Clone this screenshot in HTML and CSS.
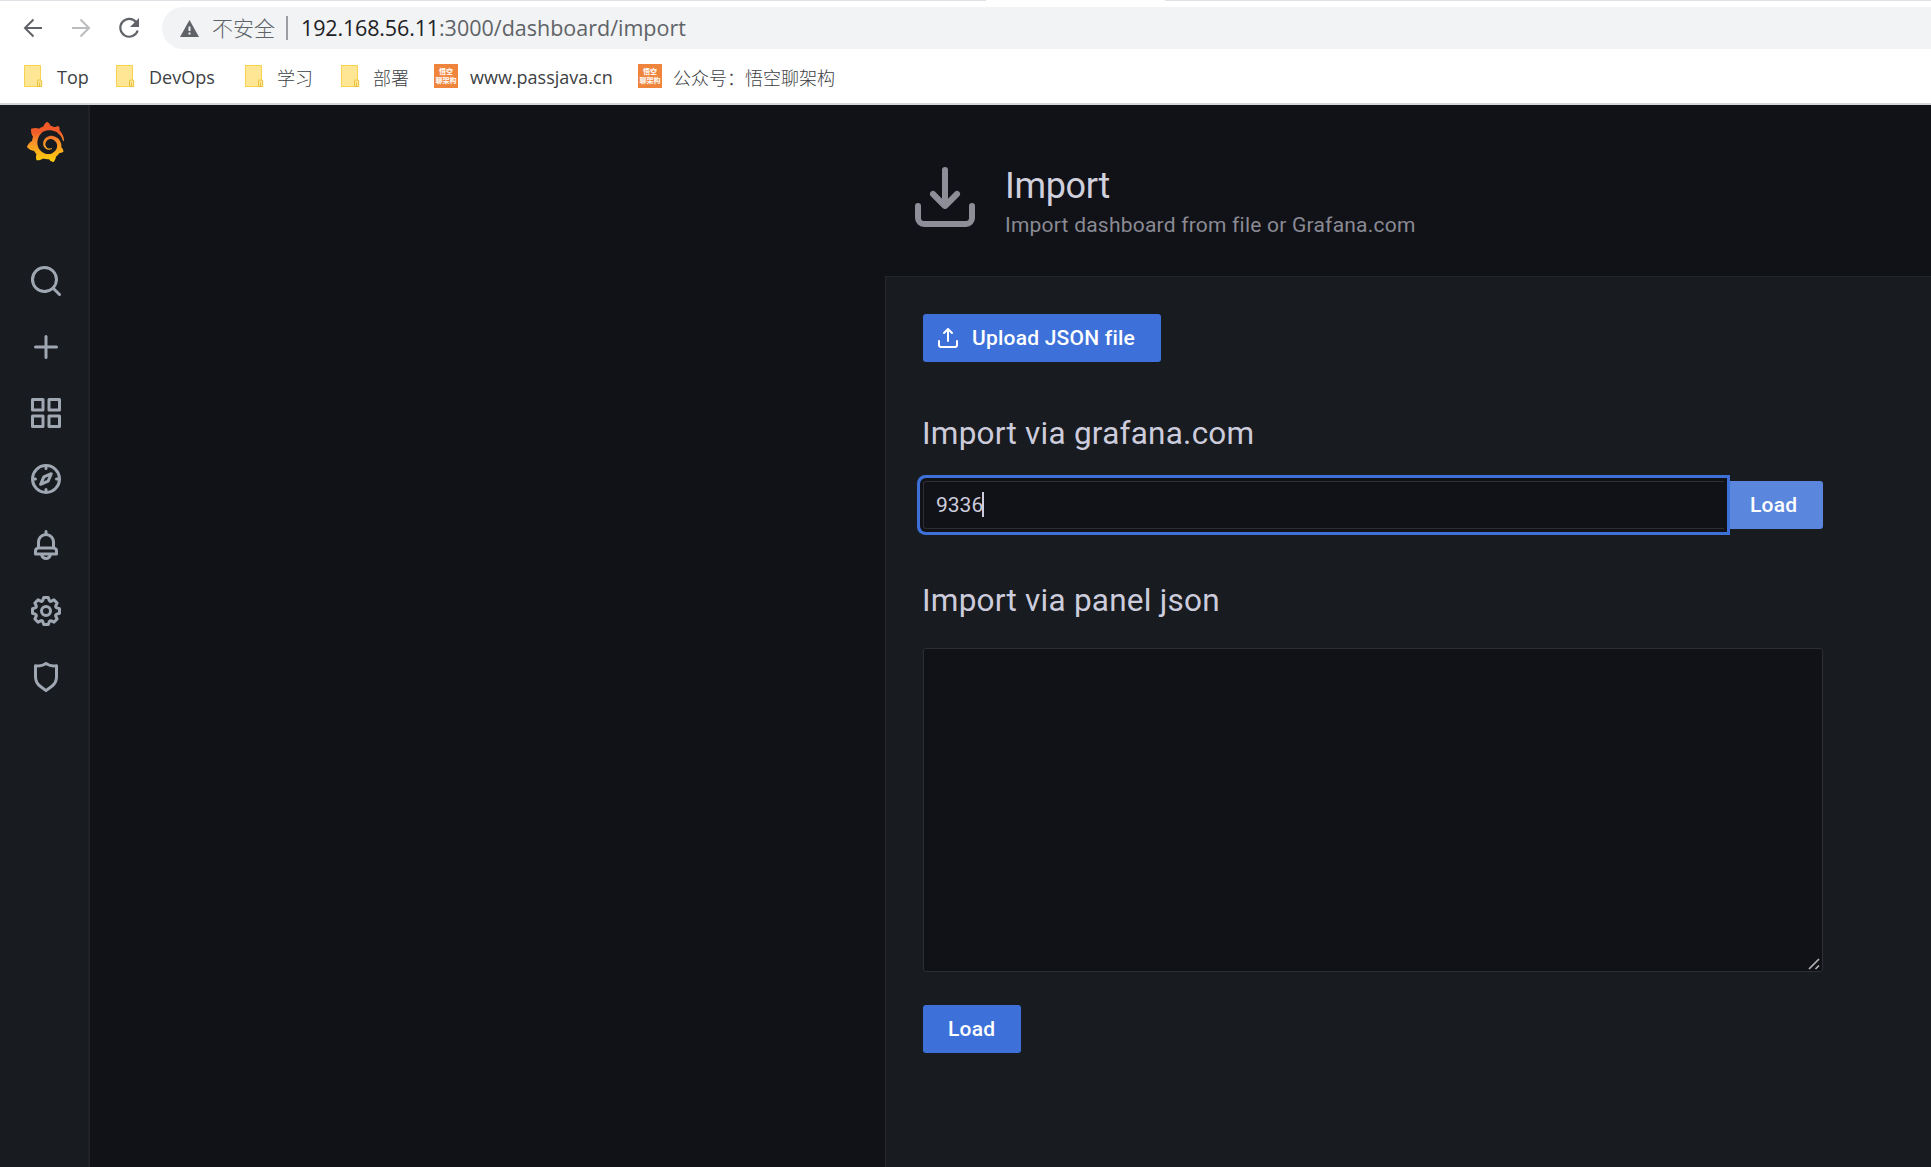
FILE: index.html
```html
<!DOCTYPE html>
<html lang="zh-CN">
<head>
<meta charset="utf-8">
<title>Import - Grafana</title>
<link rel="stylesheet" href="styles.css">
</head>
<body>
<svg class="defs" width="0" height="0" aria-hidden="true">
  <symbol id="folder" viewBox="0 0 19 22">
    <path fill="#ffe694" d="M0 0h17v22H0z"/>
    <path fill="none" stroke="#f6d250" d="M.5.5h16v21H.5z"/>
    <path fill="#ffe694" stroke="#eac13c" d="M13.5 21.500v-5.500q0-1 1.200-1h1.800q1.200 0 1.200 1v5.500z"/>
    <path fill="none" stroke="#eac13c" d="M15.500 21v-3.500"/>
  </symbol>
</svg>
<header class="browser">
  <div class="tabstrip"><i class="tab-edge left"></i><i class="tab-edge right"></i></div>
  <div class="toolbar">
    <svg class="nav-btn" viewBox="0 0 24 24" fill="none" stroke="#5f6368" stroke-width="2"><path d="M21 12H4M12.500 3.500L4 12l8.500 8.500"/></svg>
    <svg class="nav-btn" viewBox="0 0 24 24" fill="none" stroke="#babcbe" stroke-width="2"><path d="M3 12h17M11.500 3.500L20 12l-8.500 8.500"/></svg>
    <svg class="nav-btn" viewBox="0 0 24 24"><path fill="none" stroke="#5f6368" stroke-width="2.200" d="M19.200 6.300A8.900 8.900 0 1 0 20.700 14.500"/><path fill="#5f6368" d="M22 2v9h-9z"/></svg>
    <div class="omnibox">
      <svg class="warn" width="19" height="17" viewBox="0 0 19 17"><path fill="#5f6368" d="M9.500 0L19 17H0z"/><path fill="#f1f3f4" d="M8.500 6.500h2v4.500h-2zM8.500 12.500h2v2h-2z"/></svg>
      <span class="insecure">不安全</span>
      <i class="sep"></i>
      <span class="url"><b>192.168.56.11</b>:3000/dashboard/import</span>
    </div>
  </div>
  <nav class="bookmarks">
    <a><svg class="folder"><use href="#folder"/></svg><span>Top</span></a>
    <a><svg class="folder"><use href="#folder"/></svg><span>DevOps</span></a>
    <a><svg class="folder"><use href="#folder"/></svg><span class="cjk">学习</span></a>
    <a><svg class="folder"><use href="#folder"/></svg><span class="cjk">部署</span></a>
    <a><span class="favicon"><em>悟空</em><em>聊架构</em></span><span>www.passjava.cn</span></a>
    <a><span class="favicon"><em>悟空</em><em>聊架构</em></span><span class="cjk">公众号：悟空聊架构</span></a>
  </nav>
</header>
<div class="app">
  <aside class="sidemenu">
    <svg class="logo" viewBox="8.500 5 334.200 357"><defs><linearGradient id="flame" x1="0" y1="1" x2="0" y2="0"><stop offset="0" stop-color="#fcd00c"/><stop offset=".5" stop-color="#f9912a"/><stop offset=".75" stop-color="#f15a29"/><stop offset="1" stop-color="#f05a28"/></linearGradient></defs><path fill="url(#flame)" d="M342,161.2c-0.6-6.1-1.6-13.1-3.6-20.9c-2-7.7-5-16.2-9.4-25c-4.4-8.8-10.1-17.9-17.5-26.8c-2.9-3.5-6.1-6.9-9.5-10.2c5.1-20.3-6.2-37.9-6.2-37.9c-19.5-1.2-31.9,6.1-36.5,9.4c-0.8-0.3-1.5-0.7-2.3-1c-3.3-1.3-6.7-2.6-10.3-3.7c-3.5-1.1-7.1-2.1-10.8-3c-3.7-0.9-7.4-1.6-11.2-2.2c-0.7-0.1-1.3-0.2-2-0.3c-8.5-27.2-32.9-38.6-32.9-38.6c-27.3,17.3-32.4,41.5-32.4,41.5s-0.1,0.5-0.3,1.4c-1.5,0.4-3,0.9-4.5,1.3c-2.1,0.6-4.2,1.4-6.2,2.2c-2.1,0.8-4.1,1.6-6.2,2.5c-4.1,1.8-8.2,3.8-12.2,6c-3.9,2.2-7.7,4.6-11.4,7.1c-0.5-0.2-1-0.4-1-0.4c-37.8-14.4-71.3,2.9-71.3,2.9c-3.1,40.2,15.1,65.5,18.7,70.1c-0.9,2.5-1.7,5-2.5,7.5c-2.8,9.1-4.9,18.4-6.2,28.1c-0.2,1.4-0.4,2.8-0.5,4.2C18.800,192.700,8.500,228,8.500,228c29.100,33.500,63.100,35.600,63.100,35.600c0,0,0.100-0.100,0.100-0.100c4.300,7.700,9.300,15,14.900,21.900c2.400,2.900,4.800,5.600,7.400,8.300c-10.600,30.400,1.500,55.600,1.500,55.600c32.400,1.200,53.700-14.200,58.200-17.700c3.200,1.100,6.500,2.100,9.800,2.900c10,2.600,20.200,4.100,30.400,4.500c2.500,0.100,5.100,0.200,7.600,0.100l1.200,0l0.800,0l1.600,0l1.600-0.100l0,0.100c15.300,21.800,42.100,24.900,42.100,24.900c19.100-20.100,20.200-40.100,20.200-44.400l0,0c0,0,0-0.100,0-0.300c0-0.400,0-0.600,0-0.600l0,0c0-0.300,0-0.600,0-0.900c4-2.800,7.800-5.800,11.400-9.100c7.600-6.900,14.300-14.800,19.900-23.300c0.500-0.800,1-1.600,1.500-2.400c21.600,1.200,36.900-13.400,36.900-13.400c-3.600-22.500-16.400-33.500-19.100-35.600l0,0c0,0-0.100-0.100-0.300-0.200c-0.200-0.100-0.200-0.200-0.200-0.200c0,0,0,0,0,0c-0.100-0.100-0.300-0.200-0.500-0.300c0.100-1.400,0.200-2.700,0.300-4.100c0.200-2.400,0.200-4.900,0.200-7.300l0-1.800l0-0.900l0-0.500l-0.100-2.100l-0.100-2c0-0.700-0.100-1.300-0.200-1.900c-0.100-0.600-0.100-1.300-0.200-1.900l-0.200-1.900l-0.300-1.900c-0.400-2.500-0.800-4.900-1.400-7.400c-2.300-9.700-6.100-18.900-11-27.200c-5-8.300-11.200-15.600-18.300-21.800c-7-6.200-14.900-11.200-23.100-14.900c-8.300-3.700-16.900-6.100-25.500-7.200c-4.300-0.600-8.600-0.800-12.900-0.700l-1.600,0l-1.600,0l-1.600,0.100c-0.600,0-1.200,0.100-1.700,0.100c-2.200,0.200-4.400,0.500-6.500,0.900c-8.600,1.600-16.700,4.700-23.800,9c-7.100,4.300-13.300,9.600-18.300,15.600c-5,6-8.900,12.700-11.600,19.600c-2.700,6.900-4.200,14.100-4.600,21c-0.100,1.700-0.100,3.500-0.100,5.200c0,0.400,0,0.900,0,1.300l0.100,1.400c0.100,0.800,0.100,1.700,0.200,2.500c0.300,3.500,1,6.900,1.900,10.100c1.900,6.500,4.900,12.400,8.600,17.400c3.700,5,8.200,9.100,12.900,12.400c4.700,3.200,9.800,5.500,14.800,7c5,1.500,10,2.100,14.700,2.100c0.600,0,1.200,0,1.700,0c0.300,0,0.600,0,0.900,0c0.300,0,0.600,0,0.900-0.100c0.500,0,1-0.100,1.500-0.100c0.100,0,0.300,0,0.400-0.100l0.500-0.100c0.300,0,0.600-0.100,0.900-0.100c0.600-0.100,1.100-0.200,1.700-0.300c0.600-0.100,1.100-0.200,1.600-0.400c1.100-0.200,2.100-0.600,3.100-0.900c2-0.700,4-1.500,5.700-2.400c1.800-0.900,3.400-2,5-3c0.400-0.300,0.900-0.600,1.300-1c1.600-1.300,1.900-3.700,0.600-5.300c-1.100-1.400-3.100-1.800-4.700-0.900c-0.400,0.200-0.800,0.400-1.200,0.600c-1.400,0.700-2.800,1.300-4.300,1.800c-1.500,0.500-3.100,0.900-4.700,1.200c-0.800,0.100-1.600,0.200-2.500,0.300c-0.400,0-0.800,0.100-1.300,0.100c-0.400,0-0.900,0-1.200,0c-0.400,0-0.800,0-1.200,0c-0.500,0-1,0-1.500-0.100l-0.600,0c-0.200,0-0.500,0-0.700-0.100c-0.500-0.100-0.900-0.100-1.400-0.200c-3.700-0.500-7.400-1.600-10.900-3.200c-3.600-1.600-7-3.800-10.100-6.600c-3.100-2.800-5.800-6.100-7.900-9.900c-2.100-3.800-3.600-8-4.300-12.400c-0.300-2.200-0.500-4.500-0.400-6.700c0-0.600,0.100-1.200,0.100-1.800l0-0.800c0-0.300,0.100-0.600,0.100-0.900c0.100-1.200,0.300-2.400,0.500-3.600c1.700-9.600,6.500-19,13.900-26.100c1.900-1.800,3.900-3.400,6-4.900c2.100-1.500,4.400-2.800,6.800-3.900c2.400-1.100,4.800-2,7.400-2.700c2.500-0.700,5.100-1.100,7.800-1.400c1.300-0.100,2.600-0.200,4-0.200c0.400,0,0.600,0,0.900,0l1.100,0l0.700,0l0.400,0l1.100,0.100c2.900,0.200,5.700,0.600,8.500,1.300c5.600,1.200,11.100,3.300,16.200,6.100c10.200,5.700,18.900,14.500,24.200,25.100c2.700,5.300,4.600,11,5.500,16.900c0.200,1.500,0.400,3,0.500,4.500l0.100,1.100l0.100,1.100c0,0.400,0,0.800,0,1.100c0,0.400,0,0.800,0,1.100l0,1l0,1.100c0,0.700-0.100,1.900-0.100,2.600c-0.100,1.600-0.300,3.300-0.500,4.900c-0.200,1.600-0.500,3.200-0.800,4.800c-0.300,1.600-0.700,3.200-1.100,4.700c-0.800,3.100-1.800,6.200-3,9.300c-2.400,6-5.600,11.800-9.400,17.100c-7.700,10.600-18.200,19.200-30.200,24.700c-6,2.700-12.300,4.700-18.800,5.700c-3.200,0.600-6.500,0.900-9.800,1l-0.600,0l-0.500,0l-1.100,0l-1.600,0l-1.200,0c-1.800,0-3.500-0.100-5.300-0.300c-7-0.500-13.900-1.800-20.700-3.700c-6.700-1.900-13.200-4.600-19.400-7.800c-12.300-6.600-23.400-15.600-32-26.500c-4.300-5.400-8.100-11.300-11.200-17.400c-3.100-6.100-5.600-12.600-7.400-19.100c-1.800-6.600-2.900-13.300-3.400-20.100l-0.100-1.300l0-6.500c0-0.800,0-1.700,0-2.500c0.100-3.300,0.400-6.800,0.800-10.200c0.400-3.400,1-6.900,1.700-10.300c0.700-3.400,1.500-6.800,2.500-10.200c1.900-6.700,4.300-13.200,7.100-19.300c5.700-12.200,13.100-23.100,22-31.800c2.200-2.200,4.500-4.200,6.900-6.200c2.400-1.900,4.900-3.700,7.500-5.400c2.500-1.700,5.200-3.200,7.900-4.600c1.300-0.700,2.700-1.400,4.100-2c1.400-0.600,2.800-1.200,4.200-1.800c2.800-1.200,5.700-2.200,8.700-3.100c1.500-0.400,2.900-0.900,4.400-1.300c1.500-0.400,3-0.800,4.500-1.100c1.500-0.400,3-0.700,4.600-1c1.500-0.300,3-0.500,4.600-0.800c1.600-0.200,3.300-0.400,4.900-0.600c1.900-0.200,3.800-0.400,5.800-0.500c2.900-0.200,9.900-0.400,12.800-0.200c5.800,0.200,11.500,0.900,17,1.900c11.100,2.100,21.500,5.600,31,10.300c9.500,4.600,17.900,10.300,25.300,16.500c3.600,3,7,6.200,10.200,9.700c3.100,3.300,6,6.600,8.600,10c5.200,6.700,9.400,13.500,12.700,19.900c1.600,3,3,6.200,4.300,9.400c1.200,3,2.400,5.900,3.300,8.600c1.500,4.400,2.600,8.300,3.500,11.700c0.300,1.400,1.600,2.300,3,2.100c1.500-0.100,2.600-1.300,2.600-2.800C342.600,170.400,342.500,166.100,342,161.200z"/></svg>
    <svg class="mi" viewBox="0 0 24 24"><path d="M21.710,20.290,18,16.610A9,9,0,1,0,16.610,18l3.680,3.680a1,1,0,0,0,1.420,0A1,1,0,0,0,21.710,20.290ZM11,18a7,7,0,1,1,7-7A7,7,0,0,1,11,18Z"/></svg>
    <svg class="mi" viewBox="0 0 24 24"><path d="M19,11H13V5a1,1,0,0,0-2,0v6H5a1,1,0,0,0,0,2h6v6a1,1,0,0,0,2,0V13h6a1,1,0,0,0,0-2Z"/></svg>
    <svg class="mi" viewBox="0 0 24 24"><path d="M10,13H3a1,1,0,0,0-1,1v7a1,1,0,0,0,1,1h7a1,1,0,0,0,1-1V14A1,1,0,0,0,10,13ZM9,20H4V15H9ZM21,2H14a1,1,0,0,0-1,1v7a1,1,0,0,0,1,1h7a1,1,0,0,0,1-1V3A1,1,0,0,0,21,2ZM20,9H15V4h5Zm1,4H14a1,1,0,0,0-1,1v7a1,1,0,0,0,1,1h7a1,1,0,0,0,1-1V14A1,1,0,0,0,21,13Zm-1,7H15V15h5ZM10,2H3A1,1,0,0,0,2,3v7a1,1,0,0,0,1,1h7a1,1,0,0,0,1-1V3A1,1,0,0,0,10,2ZM9,9H4V4H9Z"/></svg>
    <svg class="mi" viewBox="0 0 24 24"><path d="M12,2A10,10,0,1,0,22,12,10,10,0,0,0,12,2Zm1,17.930V19a1,1,0,0,0-2,0v.93A8,8,0,0,1,4.070,13H5a1,1,0,0,0,0-2H4.070A8,8,0,0,1,11,4.070V5a1,1,0,0,0,2,0V4.070A8,8,0,0,1,19.930,11H19a1,1,0,0,0,0,2h.93A8,8,0,0,1,13,19.930ZM15.140,7.550l-5,2.120a1,1,0,0,0-.52.52l-2.120,5a1,1,0,0,0,.21,1.100,1,1,0,0,0,.7.29.93.93,0,0,0,.4-.09l5-2.120a1,1,0,0,0,.52-.52l2.120-5a1,1,0,0,0-1.310-1.310Zm-2.490,5.100-2.280,1,1-2.280,2.280-1Z"/></svg>
    <svg class="mi" viewBox="0 0 24 24"><path d="M18,13.180V10a6,6,0,0,0-5-5.910V3a1,1,0,0,0-2,0V4.090A6,6,0,0,0,6,10v3.180A3,3,0,0,0,4,16v2a1,1,0,0,0,1,1H8.140a4,4,0,0,0,7.720,0H19a1,1,0,0,0,1-1V16A3,3,0,0,0,18,13.180ZM8,10a4,4,0,0,1,8,0v3H8Zm4,10a2,2,0,0,1-1.720-1h3.440A2,2,0,0,1,12,20Zm6-3H6V16a1,1,0,0,1,1-1H17a1,1,0,0,1,1,1Z"/></svg>
    <svg class="mi" viewBox="0 0 24 24"><path d="M21.320,9.550l-1.890-.63.89-1.780A1,1,0,0,0,20.130,6L18,3.870a1,1,0,0,0-1.150-.19l-1.780.89-.63-1.890A1,1,0,0,0,13.500,2h-3a1,1,0,0,0-.95.68L8.920,4.570,7.140,3.680A1,1,0,0,0,6,3.870L3.870,6a1,1,0,0,0-.19,1.150l.89,1.780-1.890.63A1,1,0,0,0,2,10.500v3a1,1,0,0,0,.68.95l1.890.63-.89,1.780A1,1,0,0,0,3.870,18L6,20.130a1,1,0,0,0,1.150.19l1.780-.89.63,1.890a1,1,0,0,0,.95.68h3a1,1,0,0,0,.95-.68l.63-1.890,1.780.89A1,1,0,0,0,18,20.130L20.130,18a1,1,0,0,0,.19-1.150l-.89-1.780,1.890-.63A1,1,0,0,0,22,13.500v-3A1,1,0,0,0,21.320,9.550ZM20,12.780l-1.200.4A2,2,0,0,0,17.640,16l.57,1.140-1.100,1.100L16,17.640a2,2,0,0,0-2.790,1.160l-.4,1.200H11.220l-.4-1.200A2,2,0,0,0,8,17.640l-1.140.57-1.100-1.100L6.360,16A2,2,0,0,0,5.200,13.180L4,12.780V11.220l1.200-.4A2,2,0,0,0,6.360,8L5.790,6.890l1.100-1.100L8,6.360A2,2,0,0,0,10.820,5.200l.4-1.200h1.560l.4,1.200A2,2,0,0,0,16,6.360l1.140-.57,1.100,1.100L17.640,8a2,2,0,0,0,1.160,2.790l1.200.4ZM12,8a4,4,0,1,0,4,4A4,4,0,0,0,12,8Zm0,6a2,2,0,1,1,2-2A2,2,0,0,1,12,14Z"/></svg>
    <svg class="mi" viewBox="0 0 24 24"><path d="M19.630,3.650a1,1,0,0,0-.84-.2,8,8,0,0,1-6.220-1.270,1,1,0,0,0-1.140,0A8,8,0,0,1,5.210,3.450a1,1,0,0,0-.84.2A1,1,0,0,0,4,4.430v7.450a9,9,0,0,0,3.770,7.330l3.650,2.600a1,1,0,0,0,1.160,0l3.650-2.600A9,9,0,0,0,20,11.880V4.430A1,1,0,0,0,19.630,3.650ZM18,11.880a7,7,0,0,1-2.930,5.700L12,19.770,8.930,17.580A7,7,0,0,1,6,11.880V5.580a10,10,0,0,0,6-1.390,10,10,0,0,0,6,1.390Z"/></svg>
  </aside>
  <main class="page">
    <div class="page-header">
      <svg class="header-icon" width="72" height="72" viewBox="0 0 24 24"><path fill="#8e8e99" d="M21,14a1,1,0,0,0-1,1v4a1,1,0,0,1-1,1H5a1,1,0,0,1-1-1V15a1,1,0,0,0-2,0v4a3,3,0,0,0,3,3H19a3,3,0,0,0,3-3V15A1,1,0,0,0,21,14Zm-9.710,1.710a1,1,0,0,0,.33.21.94.94,0,0,0,.76,0,1,1,0,0,0,.33-.21l4-4a1,1,0,0,0-1.420-1.420L13,12.590V3a1,1,0,0,0-2,0v9.590l-2.290-2.300a1,1,0,1,0-1.420,1.420Z"/></svg>
      <div class="titles">
        <h1>Import</h1>
        <p>Import dashboard from file or Grafana.com</p>
      </div>
    </div>
    <section class="panel">
      <button class="btn upload"><svg width="24" height="24" viewBox="0 0 24 24"><path fill="#fff" d="M8.710,7.710,11,5.410V15a1,1,0,0,0,2,0V5.410l2.290,2.300a1,1,0,0,0,1.420,0,1,1,0,0,0,0-1.420l-4-4a1,1,0,0,0-.33-.21,1,1,0,0,0-.76,0,1,1,0,0,0-.33.21l-4,4A1,1,0,1,0,8.710,7.710ZM21,14a1,1,0,0,0-1,1v4a1,1,0,0,1-1,1H5a1,1,0,0,1-1-1V15a1,1,0,0,0-2,0v4a3,3,0,0,0,3,3H19a3,3,0,0,0,3-3V15A1,1,0,0,0,21,14Z"/></svg><span>Upload JSON file</span></button>
      <h2>Import via grafana.com</h2>
      <div class="field">
        <div class="input"><span>9336</span><i class="caret"></i></div>
        <button class="btn hover">Load</button>
      </div>
      <h2>Import via panel json</h2>
      <div class="textarea"><svg width="12" height="12" viewBox="0 0 12 12" stroke="#b4b4b4" stroke-width="1.700"><path d="M1 11L11 1M7.500 11L11 7.500"/></svg></div>
      <button class="btn submit">Load</button>
    </section>
  </main>
</div>
</body>
</html>
```
FILE: styles.css
```css
* { box-sizing: border-box; }
body {
  margin: 0;
  width: 1931px;
  height: 1167px;
  overflow: hidden;
  display: flex;
  flex-direction: column;
  background: #111217;
  font-family: Roboto, "Liberation Sans", sans-serif;
}
.defs { position: absolute; }

/* browser chrome */
.browser {
  flex: none;
  height: 105px;
  background: #fff;
  border-bottom: 2px solid #d5d6d8;
  font-family: "Open Sans", "Noto Sans CJK SC", sans-serif;
}
.tabstrip { height: 1px; display: flex; justify-content: space-between; }
.tab-edge { background: #dee1e6; }
.tab-edge.left { width: 986px; }
.tab-edge.right { width: 766px; }
.toolbar {
  height: 54px;
  padding: 6px 0 6px 21px;
  display: flex;
  align-items: center;
  gap: 24px;
}
.nav-btn { width: 24px; height: 24px; flex: none; }
.omnibox {
  flex: 1;
  height: 42px;
  margin-left: -3px;
  padding-left: 18px;
  display: flex;
  align-items: center;
  background: #f1f3f4;
  border-radius: 21px 0 0 21px;
  font-size: 21.500px;
  color: #5f6368;
}
.warn { flex: none; }
.insecure {
  width: 63px;
  margin-left: 13px;
  padding-bottom: 1px;
  font-family: "Noto Sans CJK SC", sans-serif;
  font-weight: 300;
  font-size: 21px;
  line-height: 41px;
  white-space: nowrap;
}
.sep { width: 2px; height: 24px; margin: 0 13px 0 11px; background: #9a9da1; }
.url { padding-bottom: 1px; white-space: nowrap; }
.url b { font-weight: 400; letter-spacing: -.15px; color: #202124; }
.bookmarks {
  height: 48px;
  padding: 9px 0 0 24px;
  display: grid;
  grid-template-columns: 92px 129px 96px 93px 204px auto;
  align-items: start;
  font-size: 18px;
  color: #3c4043;
}
.bookmarks a { display: flex; align-items: center; height: 24px; white-space: nowrap; }
.bookmarks a > span:last-child { padding-top: 2px; }
.bookmarks .cjk { margin-left: -1px; font-family: "Noto Sans CJK SC", sans-serif; font-weight: 300; }
.folder { width: 19px; height: 22px; margin-right: 14px; flex: none; }
.favicon {
  width: 24px;
  height: 24px;
  margin-right: 12px;
  display: flex;
  flex-direction: column;
  align-items: center;
  justify-content: center;
  background: #ef843c;
  color: #fff;
  font-size: 7px;
  line-height: 9px;
  font-weight: 700;
}
.favicon em { font-style: normal; }

/* side menu */
.app { flex: 1; display: flex; min-height: 0; }
.sidemenu {
  width: 90px;
  flex: none;
  padding-top: 17px;
  display: flex;
  flex-direction: column;
  align-items: center;
  background: #181b1f;
  border-right: 2px solid #202226;
}
.logo { width: 37px; height: 40px; margin: 0 0 101px 3px; flex: none; }
.mi { width: 36px; height: 36px; margin: 0 0 30px 4px; flex: none; fill: #9fa7b3; }

/* page */
.page { flex: 1; padding-left: 795px; display: flex; flex-direction: column; }
.page-header { height: 171px; padding: 56px 0 0 24px; display: flex; gap: 24px; }
.header-icon { flex: none; }
.titles { padding-top: 3px; }
h1, h2, p { margin: 0; font-weight: 400; }
h1 { font-size: 36px; line-height: 45px; letter-spacing: -.32px; color: #d0d0dd; }
p { font-size: 21px; line-height: 32px; letter-spacing: .22px; color: #8a8a94; }
.panel {
  flex: 1;
  padding: 37px 107px 0 37px;
  display: flex;
  flex-direction: column;
  align-items: flex-start;
  background: #181b1f;
  border: solid #24262b;
  border-width: 1px 0 0 1px;
}
.btn {
  height: 48px;
  padding: 0 24px;
  border: 0;
  border-radius: 3px;
  background: #3d71d9;
  color: #fff;
  font: 500 21px/48px Roboto, sans-serif;
  letter-spacing: .22px;
  display: flex;
  align-items: center;
  white-space: nowrap;
}
.upload { width: 238px; padding: 0 0 0 13px; gap: 12px; }
h2 {
  margin: 52px 0 27px -1px;
  font-size: 31.500px;
  line-height: 40px;
  letter-spacing: .24px;
  color: #ccccdc;
}
.field { width: 900px; display: flex; }
.input {
  flex: 1;
  height: 48px;
  padding: 0 12px;
  z-index: 1;
  display: flex;
  align-items: center;
  background: #111217;
  border: solid #2c2e33;
  border-width: 1px 0 1px 1px;
  border-radius: 3px 0 0 3px;
  box-shadow: 0 0 0 3px #111217, 0 0 0 6px #3d71d9;
  font-size: 21px;
  color: #ccccdc;
}
.caret { width: 2px; height: 25px; margin: -1px 0 0 -1px; background: #ccccdc; }
.hover { width: 99px; padding: 0 0 0 26px; background: #5a86de; border-radius: 0 3px 3px 0; }
.textarea {
  width: 900px;
  height: 324px;
  padding: 0 2px 1px 0;
  display: flex;
  align-items: flex-end;
  justify-content: flex-end;
  background: #111217;
  border: 1px solid #2c2e33;
  border-radius: 3px;
}
.submit { width: 98px; padding-left: 25px; margin-top: 33px; }
```
